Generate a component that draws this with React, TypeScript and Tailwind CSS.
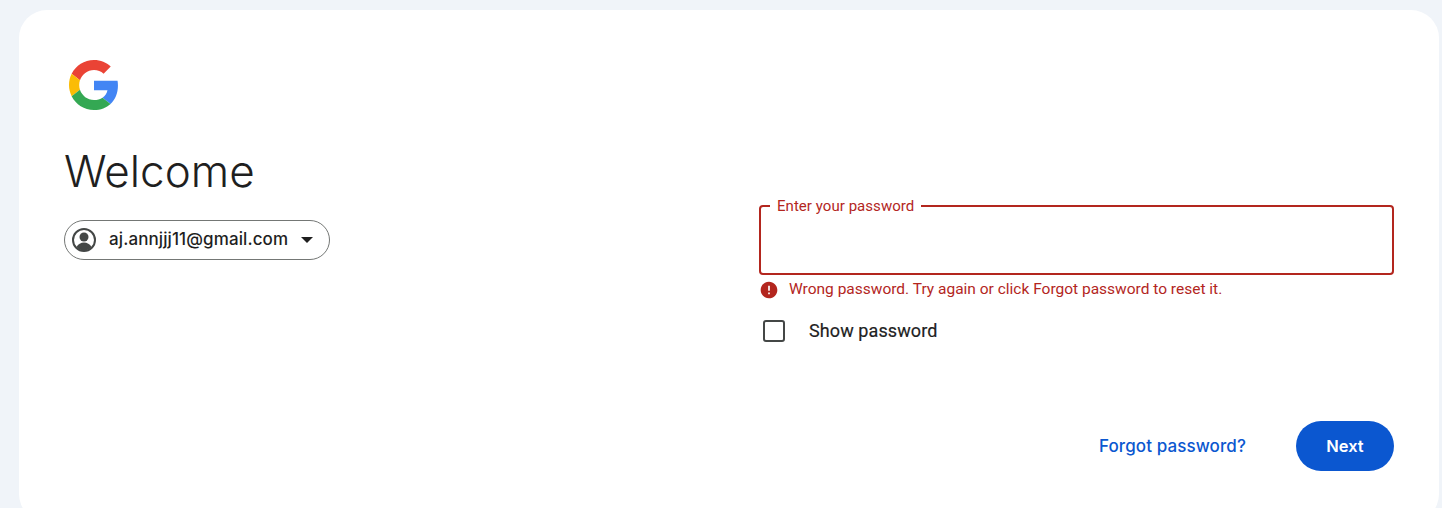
export default function App() {
  return (
    <div className="h-[508px] overflow-hidden bg-[#f0f4f9] pt-[10px] pl-[19px] pr-[3px] font-['Roboto',sans-serif]">
      <div className="h-[512px] rounded-[28px] bg-white pl-[45px] pr-[45px] pt-[50px] flex">
        {/* Left side: logo, title, account chip */}
        <div className="w-[695px] shrink-0">
          <svg viewBox="0 0 48 48" className="ml-[5px] block h-[50px] w-[50px]">
            <path fill="#EA4335" d="M24 9.5c3.54 0 6.71 1.22 9.21 3.6l6.85-6.85C35.9 2.38 30.47 0 24 0 14.62 0 6.51 5.38 2.56 13.22l7.98 6.19C12.43 13.72 17.74 9.5 24 9.5z" />
            <path fill="#4285F4" d="M46.98 24.55c0-1.57-.15-3.09-.38-4.55H24v9.02h12.94c-.58 2.96-2.26 5.48-4.78 7.18l7.73 6c4.51-4.18 7.09-10.36 7.09-17.65z" />
            <path fill="#FBBC05" d="M10.53 28.59c-.48-1.45-.76-2.99-.76-4.59s.27-3.14.76-4.59l-7.98-6.19C.92 16.46 0 20.12 0 24c0 3.88.92 7.54 2.56 10.78l7.97-6.19z" />
            <path fill="#34A853" d="M24 48c6.48 0 11.93-2.13 15.89-5.81l-7.73-6c-2.15 1.45-4.92 2.3-8.16 2.3-6.26 0-11.57-4.22-13.47-9.91l-7.98 6.19C6.51 42.62 14.62 48 24 48z" />
          </svg>
          <h1 className="mt-[35px] h-[52px] text-[44px] leading-[52px] font-[350] text-[#1f1f1f] font-['Inter',sans-serif]">
            Welcome
          </h1>
          <div className="mt-[23px] flex h-[40px] w-[266px] items-center rounded-full border border-[#747775] pl-[7px]">
            <svg viewBox="0 0 24 24" className="h-[24px] w-[24px] shrink-0">
              <circle cx="12" cy="12" r="11" fill="none" stroke="#444746" strokeWidth="2" />
              <circle cx="12" cy="9" r="4.5" fill="#444746" />
              <path fill="#444746" d="M4.5 19c1.6-3 4.4-4.6 7.5-4.6s5.9 1.6 7.5 4.6c-1.9 2.2-4.6 3.5-7.5 3.5s-5.6-1.3-7.5-3.5z" />
            </svg>
            <span className="ml-[13px] mb-[1px] text-[17px] font-[450] text-[#1f1f1f] font-['Inter',sans-serif] tracking-[0.1px]">
              aj.annjjj11@gmail.com
            </span>
            <svg viewBox="0 0 12 6" className="ml-[13px] h-[6px] w-[12px]" fill="#1f1f1f">
              <path d="M0 0h12L6 6z" />
            </svg>
          </div>
        </div>

        {/* Right side: password form */}
        <div className="flex-1 pt-[138px]">
          <fieldset className="h-[77px] rounded-[4px] border-2 border-[#b3261e] pl-[9px]">
            <legend className="px-[7px] text-[15px] leading-[16px] tracking-[0.05px] text-[#b3261e]">Enter your password</legend>
          </fieldset>
          <div className="mt-[5px] flex h-[20px] items-center text-[15.5px] text-[#b3261e]">
            <svg viewBox="0 0 24 24" className="h-[20px] w-[20px] shrink-0" fill="#b3261e">
              <path d="M12 2C6.48 2 2 6.48 2 12s4.48 10 10 10 10-4.48 10-10S17.52 2 12 2zm1 15h-2v-2h2v2zm0-4h-2V7h2v6z" />
            </svg>
            <span className="ml-[10px]">Wrong password. Try again or click Forgot password to reset it.</span>
          </div>
          <div className="mt-[19px] flex h-[24px] items-center">
            <div className="ml-[4px] h-[22px] w-[22px] rounded-[3px] border-2 border-[#444746]" />
            <span className="ml-[24px] mb-[1px] text-[18px] tracking-[0.1px] text-[#1f1f1f] [-webkit-text-stroke:0.2px_#1f1f1f]">Show password</span>
          </div>
          <div className="mt-[78px] flex items-center justify-end">
            <a className="mt-[1px] text-[17px] font-[450] tracking-[0.1px] text-[#0b57d0] font-['Inter',sans-serif]">Forgot password?</a>
            <button className="ml-[50px] h-[50px] w-[98px] rounded-full bg-[#0b57d0] pt-[1px] text-[16.5px] font-semibold text-white font-['Inter',sans-serif]">
              Next
            </button>
          </div>
        </div>
      </div>
    </div>
  );
}
